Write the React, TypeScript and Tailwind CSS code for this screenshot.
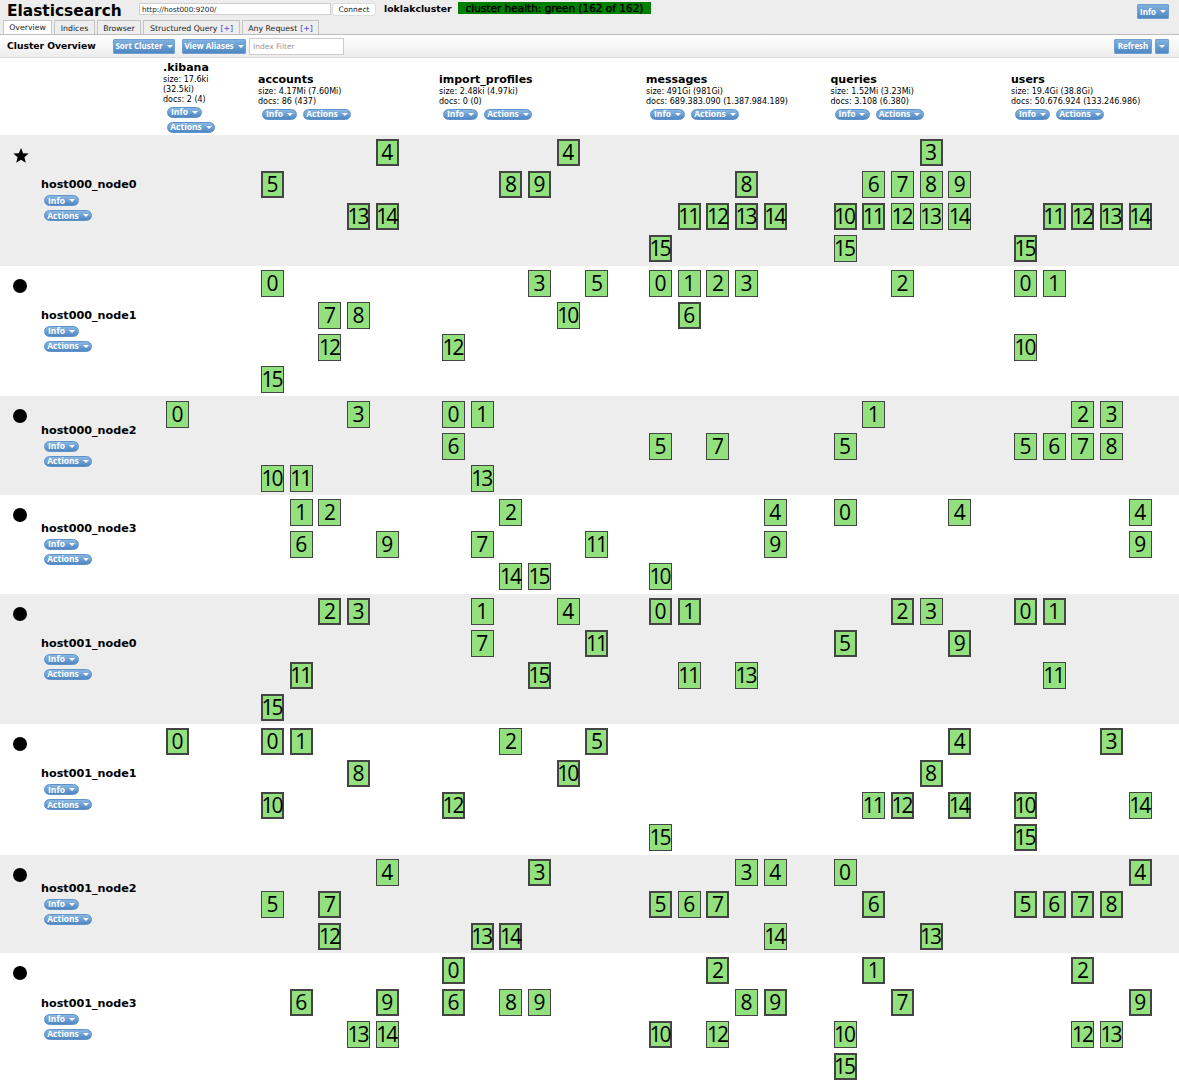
import type { ReactNode } from "react";

const columns = [
  { name: ".kibana", size: "size: 17.6ki", total: "(32.5ki)", docs: "docs: 2 (4)", cell: "w-[95px]", grid: "w-[28.7px] grid-cols-1", count: 1 },
  { name: "accounts", size: "size: 4.17Mi (7.60Mi)", docs: "docs: 86 (437)", cell: "w-[181px]", grid: "w-[143.5px] grid-cols-5", count: 16 },
  { name: "import_profiles", size: "size: 2.48ki (4.97ki)", docs: "docs: 0 (0)", cell: "w-[207px]", grid: "w-[172.2px] grid-cols-6", count: 16 },
  { name: "messages", size: "size: 491Gi (981Gi)", docs: "docs: 689.383.090 (1.387.984.189)", cell: "w-[184.5px]", grid: "w-[143.5px] grid-cols-5", count: 16 },
  { name: "queries", size: "size: 1.52Mi (3.23Mi)", docs: "docs: 3.108 (6.380)", cell: "w-[180.5px]", grid: "w-[143.5px] grid-cols-5", count: 16 },
  { name: "users", size: "size: 19.4Gi (38.8Gi)", docs: "docs: 50.676.924 (133.246.986)", cell: "w-[168px]", grid: "w-[143.5px] grid-cols-5", count: 16 },
];

// one string per index column, "*" marks a primary shard (thick border)
const nodes = [
  { name: "host000_node0", master: true, shards: ["", "4* 5* 13* 14*", "4* 8* 9*", "8* 11* 12* 13* 14* 15*", "3* 6 7 8 9 10* 11* 12 13 14 15", "11* 12* 13* 14* 15*"] },
  { name: "host000_node1", shards: ["", "0 7 8 12 15", "3 5 10 12", "0 1 2 3 6*", "2", "0 1 10"] },
  { name: "host000_node2", shards: ["0", "3 10 11", "0 1 6 13", "5 7", "1 5", "2 3 5 6 7 8"] },
  { name: "host000_node3", shards: ["", "1 2 6 9", "2 7 11 14 15", "4 9 10", "0 4", "4 9"] },
  { name: "host001_node0", shards: ["", "2* 3* 11* 15*", "1 4 7 11* 15*", "0* 1* 11 13", "2* 3 5* 9*", "0* 1* 11"] },
  { name: "host001_node1", shards: ["0*", "0* 1* 8* 10*", "2 5* 10* 12*", "15", "4* 8* 11 12* 14*", "3* 10* 14 15*"] },
  { name: "host001_node2", shards: ["", "4 5 7* 12*", "3* 13* 14*", "3 4 5* 6 7* 14", "0 6* 13*", "4* 5* 6* 7* 8*"] },
  { name: "host001_node3", shards: ["", "6* 9* 13 14", "0* 6* 8 9", "2* 8 9* 10* 12", "1* 7* 10 15*", "2* 9* 12 13"] },
];

function Caret() {
  return <span className="h-0 w-0 border-x-[3px] border-t-[3px] border-x-transparent border-t-white" />;
}

function Pill({ label, width }: { label: string; width: string }) {
  return (
    <button className={`flex h-[11px] items-center justify-center gap-[4px] rounded-full border border-[#5f93cb] bg-[linear-gradient(#8ab8e2,#4f87c2)] font-['Open_Sans',sans-serif] text-[8.5px] font-bold leading-none text-white ${width}`}>
      {label}
      <Caret />
    </button>
  );
}

function SquareButton({ children, width }: { children?: ReactNode; width: string }) {
  return (
    <button className={`flex h-[15px] items-center justify-center gap-[4px] whitespace-nowrap rounded-[1px] border border-[#6f9fd3] bg-[linear-gradient(#80b1de,#4f87c2)] font-['Open_Sans',sans-serif] text-[8px] font-bold leading-none text-white ${width}`}>
      {children}
    </button>
  );
}

function Tab({ label, plus, active, width }: { label: string; plus?: boolean; active?: boolean; width: string }) {
  return (
    <div
      className={`flex h-[14px] items-center justify-center border border-[#c4c4c4] pt-[2px] text-[7.8px] leading-none text-[#222] ${width} ${
        active ? "border-b-white bg-white" : "border-b-0 bg-[#eeeeee]"
      }`}
    >
      {label}
      {plus && <span className="ml-[3px] text-[#4a43d8]">[+]</span>}
    </div>
  );
}

function Shard({ num, primary }: { num: number; primary: boolean }) {
  return (
    <div
      className={`flex h-[27px] w-[23px] items-center justify-center whitespace-nowrap border-[#444444] bg-[#93e07f] font-['Open_Sans',sans-serif] text-[21px] leading-none text-black ${
        primary ? "border-2" : "border"
      } ${num > 9 ? "pr-[2px] tracking-[-2px]" : ""}`}
    >
      {num}
    </div>
  );
}

function ShardCell({ spec, column }: { spec: string; column: (typeof columns)[number] }) {
  const parts = spec.split(" ").filter(Boolean);
  const present = new Map(parts.map((p) => [parseInt(p, 10), p.endsWith("*")]));
  const last = parts.length ? Math.max(...present.keys()) : -1;
  return (
    <div className={`shrink-0 pb-[0.9px] pl-[3px] pt-[1.7px] ${column.cell}`}>
      <div className={`grid ${column.grid}`}>
        {Array.from({ length: last + 1 }, (_, i) => (
          <div key={i} className="h-[32px] pt-[2.5px]">
            {present.has(i) && <Shard num={i} primary={present.get(i) === true} />}
          </div>
        ))}
      </div>
    </div>
  );
}

function Star() {
  return (
    <svg width="16" height="15" viewBox="0 0 16 15" className="ml-[13px] mt-[13px]">
      <path d="M8 0l2.1 5.2 5.6.4-4.3 3.6 1.4 5.5L8 11.7l-4.8 3 1.4-5.5L.3 5.6l5.6-.4z" fill="#000" />
    </svg>
  );
}

export default function App() {
  return (
    <div className="w-[1179px] overflow-hidden bg-white font-['DejaVu_Sans',sans-serif] text-black">
      {/* top header with tabs */}
      <header className="h-[35px] border-b border-[#bdbdbd] bg-[#ededed]">
        <div className="flex h-[20px] items-start">
          <h1 className="ml-[7px] mt-[2px] w-[132px] shrink-0 text-[15.4px] font-bold leading-[19px]">Elasticsearch</h1>
          <input
            readOnly
            value="http://host000:9200/"
            className="mt-[3px] h-[12px] w-[192px] border border-[#cfcfcf] bg-white px-[2px] text-[7.2px] leading-none text-[#222] outline-none"
          />
          <button className="ml-[1px] mt-[3px] h-[13px] w-[44px] rounded-[3px] border border-[#dddddd] bg-white text-[7.5px] leading-none text-[#222]">Connect</button>
          <span className="ml-[8px] mt-[3px] w-[74px] shrink-0 text-[9.3px] font-bold leading-[12px]">loklakcluster</span>
          <div className="mt-[2px] flex h-[12px] w-[193px] items-center justify-center whitespace-nowrap bg-[#008000] text-[10.5px] leading-none text-black [text-shadow:0_0_1px_#000]">
            cluster health: green (162 of 162)
          </div>
          <div className="ml-auto mr-[10px] mt-[4px]">
            <SquareButton width="w-[32px]">
              Info
              <Caret />
            </SquareButton>
          </div>
        </div>
        <nav className="flex h-[14px] gap-[2px] pl-[3px]">
          <Tab label="Overview" active width="w-[49px]" />
          <Tab label="Indices" width="w-[41px]" />
          <Tab label="Browser" width="w-[44px]" />
          <Tab label="Structured Query" plus width="w-[97px]" />
          <Tab label="Any Request" plus width="w-[77px]" />
        </nav>
      </header>

      {/* toolbar */}
      <div className="flex h-[23px] items-center border-b border-[#dddddd] bg-[linear-gradient(#ffffff,#ededed)]">
        <h2 className="ml-[7px] w-[106px] shrink-0 text-[9.2px] font-bold leading-none">Cluster Overview</h2>
        <SquareButton width="w-[62px]">
          Sort Cluster
          <Caret />
        </SquareButton>
        <div className="ml-[7px]">
          <SquareButton width="w-[64px]">
            View Aliases
            <Caret />
          </SquareButton>
        </div>
        <input
          readOnly
          placeholder="Index Filter"
          className="ml-[3px] h-[17px] w-[95px] border border-[#cccccc] bg-white px-[3px] text-[7.5px] outline-none placeholder:text-[#999999]"
        />
        <div className="ml-auto flex gap-[3px] pr-[10px]">
          <SquareButton width="w-[38px]">Refresh</SquareButton>
          <SquareButton width="w-[14px]">
            <Caret />
          </SquareButton>
        </div>
      </div>

      {/* index headers */}
      <div className="flex h-[77.2px] items-center pl-[163px]">
        {columns.map((c) => (
          <div key={c.name} className={`shrink-0 ${c.cell}`}>
            <div className="text-[11px] font-bold leading-[14px]">{c.name}</div>
            <div className="text-[8px] leading-[10px]">{c.size}</div>
            {c.total && <div className="text-[8px] leading-[10px]">{c.total}</div>}
            <div className="whitespace-nowrap text-[8px] leading-[10px]">{c.docs}</div>
            <div className={`ml-[4px] mt-[2px] flex ${c.total ? "flex-col gap-[4px]" : "gap-[6px]"}`}>
              <Pill label="Info" width="w-[35px]" />
              <Pill label="Actions" width="w-[48px]" />
            </div>
          </div>
        ))}
      </div>

      {/* nodes and their shards */}
      {nodes.map((node, i) => (
        <div key={node.name} className={`flex ${i % 2 === 0 ? "bg-[#ededed]" : "bg-white"}`}>
          <div className="w-[41px] shrink-0">
            {node.master ? <Star /> : <div className="ml-[13px] mt-[13px] h-[14px] w-[14px] rounded-full bg-black" />}
          </div>
          <div className="flex w-[122px] shrink-0 flex-col justify-center pb-[1px]">
            <div className="text-[11.2px] font-bold leading-[13px]">{node.name}</div>
            <div className="ml-[3px] mt-[4px] flex flex-col gap-[4px]">
              <Pill label="Info" width="w-[35px]" />
              <Pill label="Actions" width="w-[48px]" />
            </div>
          </div>
          {columns.map((c, j) => (
            <ShardCell key={c.name} spec={node.shards[j]} column={c} />
          ))}
        </div>
      ))}
    </div>
  );
}
